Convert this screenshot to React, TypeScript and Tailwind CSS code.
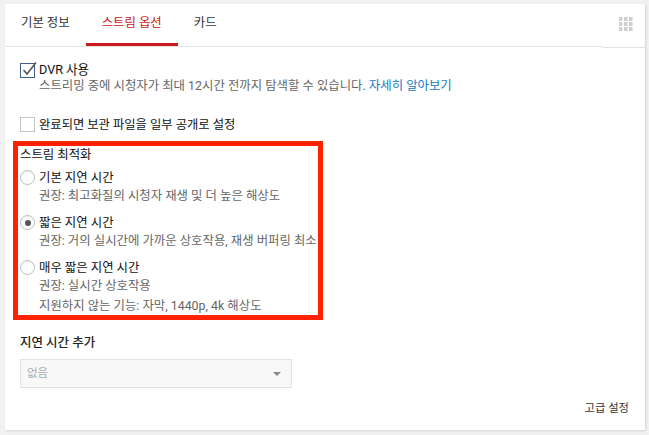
import React from "react";

const font = { fontFamily: '"Roboto", "Noto Sans CJK KR", sans-serif' };

function Radio({ checked }: { checked?: boolean }) {
  return (
    <span className="mt-[1px] flex h-[15px] w-[15px] shrink-0 items-center justify-center rounded-full border border-[#bdbdbd] bg-white shadow-[inset_0_1px_1px_rgba(0,0,0,0.06)]">
      {checked && <span className="h-[6px] w-[6px] rounded-full bg-[#555]" />}
    </span>
  );
}

export default function App() {
  return (
    <div className="h-[435px] w-[649px] bg-[#f1f1f1] pl-[5px] pt-[4px]" style={font}>
      <div className="flex h-[426px] w-[640px] flex-col bg-white shadow-[1px_1px_2px_rgba(0,0,0,0.12)]">
        {/* Tabs */}
        <div className="flex">
          <div className="flex h-[43px] flex-1 border-b border-[#e2e2e2] text-[12.4px]">
            <div className="flex h-full items-center px-4 pb-[3px] text-[#333]">기본 정보</div>
            <div className="flex h-full items-center border-b-[3px] border-[#cc181e] px-4 text-[#cc181e]">스트림 옵션</div>
            <div className="flex h-full items-center px-4 pb-[3px] text-[#333]">카드</div>
          </div>
          <div className="flex h-[44px] w-[42px] items-start justify-start border-b border-[#e2e2e2] pl-[16px] pt-[13px]">
            <svg width="14" height="14" viewBox="0 0 14 14">
              {[0, 5, 10].map((x) =>
                [0, 5, 10].map((y) => (
                  <rect key={`${x}-${y}`} x={x} y={y} width="3.5" height="4" fill="#d0d0d0" />
                ))
              )}
            </svg>
          </div>
        </div>

        {/* Content */}
        <div className="flex flex-1 flex-col pl-[8px] pr-[16px] pt-[14px]">
          {/* DVR */}
          <div className="flex gap-[4px] pl-[7px] leading-[16px]">
            <span className="relative mt-[1px] h-[15px] w-[15px] shrink-0 border border-[#3e5f8f] bg-white">
              <svg className="absolute left-[1px] top-[-3px]" width="16" height="16" viewBox="0 0 16 16">
                <path d="M1.5 9 L5 13 L14 1.5" fill="none" stroke="#555" strokeWidth="1.6" />
              </svg>
            </span>
            <div>
              <div className="text-[12.6px] text-[#111]">DVR 사용</div>
              <div className="text-[12.4px] text-[#666]">
                스트리밍 중에 시청자가 최대 12시간 전까지 탐색할 수 있습니다.{" "}
                <span className="text-[#167ac6]">자세히 알아보기</span>
              </div>
            </div>
          </div>

          <div className="mt-[23px] flex gap-[4px] pl-[7px] leading-[16px]">
            <span className="h-[15px] w-[15px] shrink-0 border border-[#c6c6c6] bg-white" />
            <div className="text-[12.3px] text-[#111]">완료되면 보관 파일을 일부 공개로 설정</div>
          </div>

          {/* Red box */}
          <div className="mt-[8px] flex h-[179px] w-[310px] flex-col border-[5px] border-[#fe2200] pl-[2px]">
            <div className="text-[12.4px] leading-[18px] text-[#111]">스트림 최적화</div>
            <div className="mt-[5px] flex gap-[4px]">
              <Radio />
              <div className="leading-[18px]">
                <div className="text-[12.4px] text-[#111]">기본 지연 시간</div>
                <div className="text-[12.4px] text-[#666]">권장: 최고화질의 시청자 재생 및 더 높은 해상도</div>
              </div>
            </div>
            <div className="mt-[9px] flex gap-[4px]">
              <Radio checked />
              <div className="leading-[18px]">
                <div className="text-[12.4px] text-[#111]">짧은 지연 시간</div>
                <div className="whitespace-nowrap text-[12.4px] text-[#666]">권장: 거의 실시간에 가까운 상호작용, 재생 버퍼링 최소</div>
              </div>
            </div>
            <div className="mt-[9px] flex gap-[4px]">
              <Radio />
              <div className="leading-[18px]">
                <div className="text-[12.4px] text-[#111]">매우 짧은 지연 시간</div>
                <div className="text-[12.4px] text-[#666]">권장: 실시간 상호작용</div>
                <div className="mt-[2px] text-[12.4px] text-[#666]">지원하지 않는 기능: 자막, 1440p, 4k 해상도</div>
              </div>
            </div>
          </div>

          {/* Latency */}
          <div className="mt-[14px] pl-[7px] text-[12.5px] font-medium leading-[18px] text-[#222]">지연 시간 추가</div>
          <div className="ml-[7px] mt-[7px] flex h-[29px] w-[272px] items-center justify-between border border-[#e2e2e2] bg-[#f8f8f8] pl-[6px] pr-[10px]">
            <span className="text-[11.5px] text-[#aaa]">없음</span>
            <svg width="8" height="4" viewBox="0 0 8 4">
              <path d="M0 0 L8 0 L4 4 Z" fill="#8a8a8a" />
            </svg>
          </div>

          <div className="mt-[12px] self-end text-[11.3px] leading-[18px] text-[#333]">고급 설정</div>
        </div>
      </div>
    </div>
  );
}
